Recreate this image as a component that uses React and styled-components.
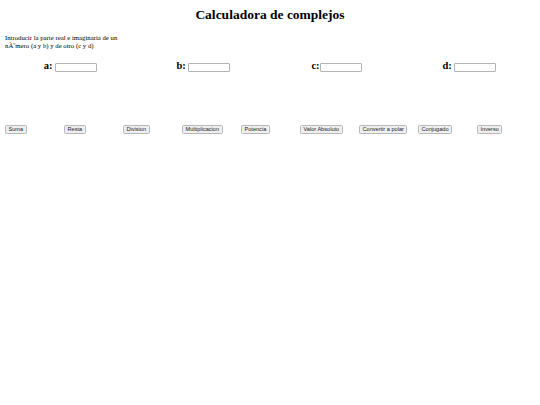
import React from "react";
import styled, { createGlobalStyle } from "styled-components";

const GlobalStyle = createGlobalStyle`
  html, body {
    margin: 0;
    padding: 0;
    background: #ffffff;
  }
  body {
    font-family: "Liberation Serif", "Times New Roman", serif;
    color: #000000;
  }
`;

const Page = styled.div`
  padding: 7px 4px 0 4px;
`;

const Title = styled.h1`
  margin: 0;
  font-size: 13.5px;
  line-height: 16px;
  font-weight: bold;
  text-align: center;
`;

const Intro = styled.p`
  margin: 11px 0 0 1px;
  width: 118px;
  font-size: 6.75px;
  line-height: 7.8px;
`;

const FieldRow = styled.div`
  display: grid;
  grid-template-columns: repeat(4, 133px);
  margin-top: 10px;
`;

const Field = styled.div`
  text-align: center;
  font-size: 10.5px;
  font-weight: bold;
  line-height: 12px;
`;

const Input = styled.input`
  box-sizing: border-box;
  width: 42px;
  height: 9px;
  padding: 0;
  margin: 0;
  border: 1px solid #b4b4b4;
  border-radius: 1px;
  background: #ffffff;
  vertical-align: -1px;
  font-size: 5.6px;
`;

const ButtonRow = styled.div`
  display: grid;
  grid-template-columns: repeat(9, 59px);
  margin-top: 53px;
`;

const ActionButton = styled.button`
  justify-self: start;
  box-sizing: border-box;
  height: 9px;
  margin: 0 0 0 1px;
  padding: 0 2.5px;
  border: 1px solid #b8b8b8;
  border-radius: 1.5px;
  background: #efefef;
  color: #222222;
  font-family: "Liberation Sans", Arial, sans-serif;
  font-size: 5.6px;
  line-height: 7px;
  white-space: nowrap;
`;

const operations = [
  "Suma",
  "Resta",
  "Division",
  "Multiplicacion",
  "Potencia",
  "Valor Absoluto",
  "Convertir a polar",
  "Conjugado",
  "Inverso",
];

export default function App() {
  return (
    <>
      <GlobalStyle />
      <Page>
        <Title>Calculadora de complejos</Title>
        <Intro>
          Introducir la parte real e imaginaria de un nÃºmero (a y b) y de otro (c y d)
        </Intro>
        <FieldRow>
          <Field>a: <Input type="text" /></Field>
          <Field>b: <Input type="text" /></Field>
          <Field>c:<Input type="text" /></Field>
          <Field>d: <Input type="text" /></Field>
        </FieldRow>
        <ButtonRow>
          {operations.map((op) => (
            <ActionButton key={op}>{op}</ActionButton>
          ))}
        </ButtonRow>
      </Page>
    </>
  );
}
